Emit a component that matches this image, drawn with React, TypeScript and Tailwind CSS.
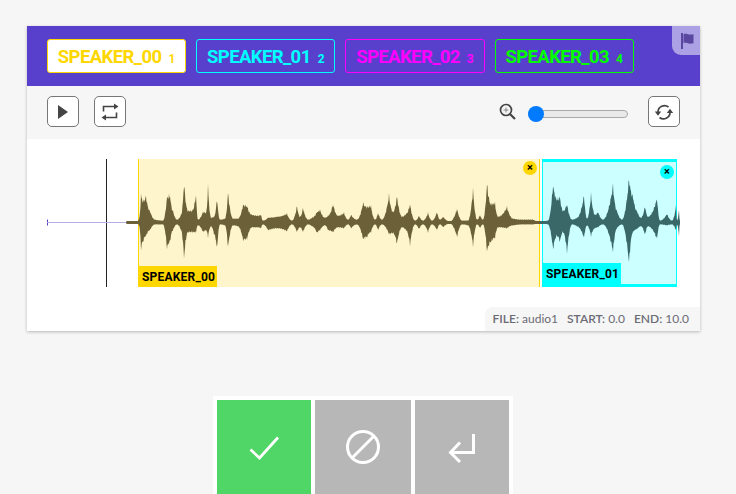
import { ReactNode } from 'react';

type Speaker = { name: string; color: string; hotkey: number; selected?: boolean };

const speakers: Speaker[] = [
  { name: 'SPEAKER_00', color: '#ffd700', hotkey: 1, selected: true },
  { name: 'SPEAKER_01', color: '#00ffff', hotkey: 2 },
  { name: 'SPEAKER_02', color: '#ff00ff', hotkey: 3 },
  { name: 'SPEAKER_03', color: '#00ff00', hotkey: 4 },
];

// x, amplitude above the centre line, amplitude below
const envelope: [number, number, number][] = [
  [126, 0, 0], [130, 1, 1], [137, 1, 1], [139, 4, 3], [141, 29, 27], [143, 22, 20], [146, 27, 14], [150, 12, 8], [155, 3, 2], [163, 2, 2],
  [167, 26, 27], [170, 28, 20], [173, 12, 8], [177, 3, 2], [181, 8, 8], [184, 41, 37], [188, 12, 10], [192, 12, 10], [196, 29, 10], [198, 3, 3],
  [203, 11, 10], [206, 10, 8], [208, 38, 15], [211, 5, 4], [214, 6, 12], [217, 25, 28], [220, 3, 2], [225, 4, 3], [228, 31, 26], [233, 4, 3], [238, 4, 4],
  [243, 18, 18], [247, 17, 17], [252, 8, 5], [258, 7, 5], [261, 8, 6], [263, 2, 2], [268, 5, 8], [277, 6, 6], [287, 9, 9],
  [292, 2, 2], [297, 17, 10], [300, 6, 5], [303, 15, 10], [308, 3, 2], [312, 5, 4], [317, 11, 11], [320, 13, 8], [325, 5, 3], [328, 7, 8], [333, 19, 10],
  [338, 7, 5], [344, 10, 6], [348, 3, 2], [351, 8, 6], [357, 3, 2], [363, 20, 17], [367, 16, 15], [371, 17, 10], [375, 3, 2], [378, 10, 8], [382, 3, 2],
  [389, 28, 12], [393, 11, 11], [397, 27, 22], [402, 6, 5], [406, 9, 8], [410, 19, 23], [415, 2, 2], [419, 7, 7], [423, 2, 2], [428, 10, 10], [432, 2, 2],
  [437, 11, 8], [440, 3, 2], [443, 6, 5], [450, 1, 1], [457, 14, 15], [462, 2, 2], [468, 2, 3], [473, 34, 24], [477, 3, 2], [480, 8, 6], [483, 3, 2],
  [487, 40, 30], [491, 19, 20], [495, 20, 16], [498, 6, 5], [507, 16, 6], [513, 4, 3], [523, 3, 2], [533, 3, 2], [540, 1, 1], [548, 2, 2],
  [553, 39, 28], [557, 24, 14], [560, 26, 20], [563, 12, 10], [567, 19, 31], [572, 3, 2], [577, 5, 4], [584, 28, 16], [587, 4, 3], [591, 29, 14], [595, 8, 6], [598, 11, 5], [603, 3, 2],
  [613, 38, 30], [617, 12, 6], [622, 3, 2], [629, 45, 42], [633, 27, 10], [637, 12, 7], [641, 5, 4], [645, 17, 13], [648, 6, 4], [657, 25, 17], [660, 2, 2], [667, 9, 3], [672, 2, 2], [676, 17, 8], [677, 2, 2], [679, 14, 14], [680, 0, 0],
];

// bends the line between two envelope points towards the lower one, so peaks come out thin
const amplitudeAt = (x: number, side: 1 | 2) => {
  const i = envelope.findIndex((p) => p[0] >= x);
  if (i <= 0) return 0;
  const [a, b] = [envelope[i - 1], envelope[i]];
  const t = (x - a[0]) / (b[0] - a[0] || 1);
  const low = Math.min(a[side], b[side]);
  const high = Math.max(a[side], b[side]);
  const towardsHigh = a[side] > b[side] ? 1 - t : t;
  const value = low + (high - low) * Math.pow(towardsHigh, 1.9);
  const jitter = 0.95 + 0.12 * Math.sin(x * 5.3 + side) * Math.cos(x * 2.1);
  return Math.max(value * jitter, 1.5);
};

const wavePath = (from: number, to: number) => {
  const top: string[] = [];
  const bottom: string[] = [];
  for (let x = from; x <= to; x += 0.5) {
    top.push(`${x},${(222.5 - amplitudeAt(x, 1)).toFixed(1)}`);
    bottom.unshift(`${x},${(222.5 + amplitudeAt(x, 2)).toFixed(1)}`);
  }
  return `M${top.join('L')}L${bottom.join('L')}Z`;
};

const PlayerButton = ({ children }: { children: ReactNode }) => (
  <button className="flex h-[31px] w-[32px] items-center justify-center rounded-[5px] border border-[#777] bg-white">
    {children}
  </button>
);

const SpeakerTab = ({ name, color, hotkey, selected }: Speaker) => (
  <div
    className={`flex h-[34px] w-[139.200px] items-center justify-center gap-[7px] rounded-[3px] border pt-[3px] text-[18.500px] font-bold ${selected ? 'bg-white' : ''}`}
    style={{ borderColor: color, color }}
  >
    <span className="tracking-[-0.6px]">{name}</span>
    <span className="mt-[3px] text-[12px]">{hotkey}</span>
  </div>
);

const RegionLabel = ({ name, color }: { name: string; color: string }) => (
  <span
    className="absolute bottom-0 left-0 flex h-[21px] items-center pt-[1px] pr-[2px] pl-[3px] text-[12px] font-bold tracking-[0.2px] text-black"
    style={{ backgroundColor: color }}
  >
    {name}
  </span>
);

const CloseDot = ({ color, className }: { color: string; className: string }) => (
  <span
    className={`absolute flex h-[14px] w-[14px] items-center justify-center rounded-full pb-[2px] text-[11px] leading-none font-bold text-black ${className}`}
    style={{ backgroundColor: color }}
  >
    ×
  </span>
);

export default function App() {
  return (
    <div className="h-[494px] w-[736px] overflow-hidden bg-[#f6f6f6] pt-[26px] pl-[27px] font-['Roboto',sans-serif]">
      <div className="relative w-[673px] bg-white shadow-[0_1px_3px_rgba(0,0,0,0.25)]">
        <div className="relative flex h-[60px] items-start gap-[10px] bg-[#5840cc] pt-[13px] pl-[20px]">
          {speakers.map((speaker) => (
            <SpeakerTab key={speaker.name} {...speaker} />
          ))}
          <div className="absolute top-0 right-0 flex h-[29px] w-[28px] items-center justify-center rounded-bl-[9px] bg-[#ada1e6] pl-[2px]">
            <svg width="15" height="16" viewBox="0 0 15 16" fill="#5a479f">
              <path d="M1 0h2v16H1zM3.500 1.200c3-1.300 5 1.300 10 0v9c-5 1.400-7-1.200-10 0z" />
            </svg>
          </div>
        </div>

        <div className="flex h-[53px] items-center bg-[#f6f6f6] px-[20px] pb-[2px]">
          <div className="flex gap-[15px]">
            <PlayerButton>
              <svg width="12" height="16" viewBox="0 0 12 16" fill="#444">
                <path d="M1 1l10 7-10 7z" />
              </svg>
            </PlayerButton>
            <PlayerButton>
              <svg width="20" height="20" viewBox="0 0 20 20" fill="none" stroke="#444" strokeWidth="1.6">
                <path d="M3.500 9.500V4.500H15M16.500 10.500v5H5" />
                <path d="M14 1.500l4.500 3-4.500 3zM6 12.500l-4.500 3 4.500 3z" fill="#444" stroke="none" />
              </svg>
            </PlayerButton>
          </div>
          <div className="ml-auto flex items-center">
            <svg width="17" height="17" viewBox="0 0 17 17" fill="none" stroke="#444">
              <circle cx="7" cy="7" r="5.500" strokeWidth="1.700" />
              <path d="M11 11l5 5" strokeWidth="2.200" />
              <path d="M4.500 7h5M7 4.500v5" strokeWidth="1" stroke="#888" />
            </svg>
            <div className="relative mt-[5px] mr-[20px] ml-[12px] h-[8px] w-[100px] rounded-full border border-[#aaa] bg-[#e9e9e9]">
              <span className="absolute top-[-5px] left-[-1px] h-[16px] w-[16px] rounded-full bg-[#007bff]" />
            </div>
            <PlayerButton>
              <svg width="20" height="20" viewBox="0 0 20 20" fill="none" stroke="#444" strokeWidth="1.700">
                <path d="M4 10A6.500 6.500 0 0 1 14.500 5" />
                <path d="M16 10.500A6.500 6.500 0 0 1 5.500 15.500" />
                <path d="M0.800 9.500h6.400l-3.200 4.200zM12.800 11h6.400l-3.200-4.200z" fill="#444" stroke="none" />
              </svg>
            </PlayerButton>
          </div>
        </div>

        <div className="relative h-[192px]">
          <div className="absolute top-[20px] left-[79px] h-[128px] w-px bg-[#222]" />
          <div className="absolute top-[20px] left-[111px] h-[128px] w-[402px] border-x border-[#ffd700] bg-[#fff5cc]">
            <CloseDot color="#ffd700" className="top-[2px] right-[2px]" />
            <RegionLabel name="SPEAKER_00" color="#ffd700" />
          </div>
          <div className="absolute top-[20px] left-[515px] h-[128px] w-[135px] border-x border-y-[3px] border-[#00ffff] bg-[#ccffff]">
            <CloseDot color="#00ffff" className="top-[3px] right-[2px]" />
            <RegionLabel name="SPEAKER_01" color="#00ffff" />
          </div>
          <svg className="absolute top-[-139px] left-[-27px]" width="736" height="330">
            <path d="M47.500 219.500v6" stroke="#5840cc" />
            <path d="M47 222.500H128" stroke="#b5aee0" />
            <path d="M126 222.500H138" stroke="#555" />
            <path d={wavePath(126, 540)} fill="#6b6038" />
            <path d={wavePath(540, 680)} fill="#3a6768" />
          </svg>
          <div className="absolute right-0 bottom-0 flex h-[24px] items-center gap-[9px] rounded-tl-[8px] bg-[#f6f6f6] pr-[11px] pl-[8px] font-['Lato',sans-serif] text-[12px] text-[#6b6b75]">
            <span>
              <b className="font-semibold">FILE:</b> audio1
            </span>
            <span>
              <b className="font-semibold">START:</b> 0.0
            </span>
            <span>
              <b className="font-semibold">END:</b> 10.0
            </span>
          </div>
        </div>
      </div>

      <div className="mt-[65px] ml-[186px] flex h-[110px] w-[300px] gap-[4px] bg-white p-[4px]">
        <div className="flex w-[94px] items-start justify-center bg-[#50d667] pt-[32px]">
          <svg width="36" height="36" viewBox="0 0 36 36" fill="none" stroke="white" strokeWidth="2.800">
            <path d="M4.500 17.500l9 8.500L32 5.500" />
          </svg>
        </div>
        <div className="flex w-[96px] items-start justify-center bg-[#b7b7b7] pt-[29px]">
          <svg width="36" height="36" viewBox="0 0 36 36" fill="none" stroke="white" strokeWidth="3">
            <circle cx="18" cy="18" r="15.500" />
            <path d="M7 29L29 7" />
          </svg>
        </div>
        <div className="flex w-[94px] items-start justify-center bg-[#b7b7b7] pt-[32px]">
          <svg width="36" height="36" viewBox="0 0 36 36" fill="none" stroke="white" strokeWidth="3">
            <path d="M29.500 2v18.500H7" />
            <path d="M16 10.500l-9.500 10 9.500 9.500" />
          </svg>
        </div>
      </div>
    </div>
  );
}
